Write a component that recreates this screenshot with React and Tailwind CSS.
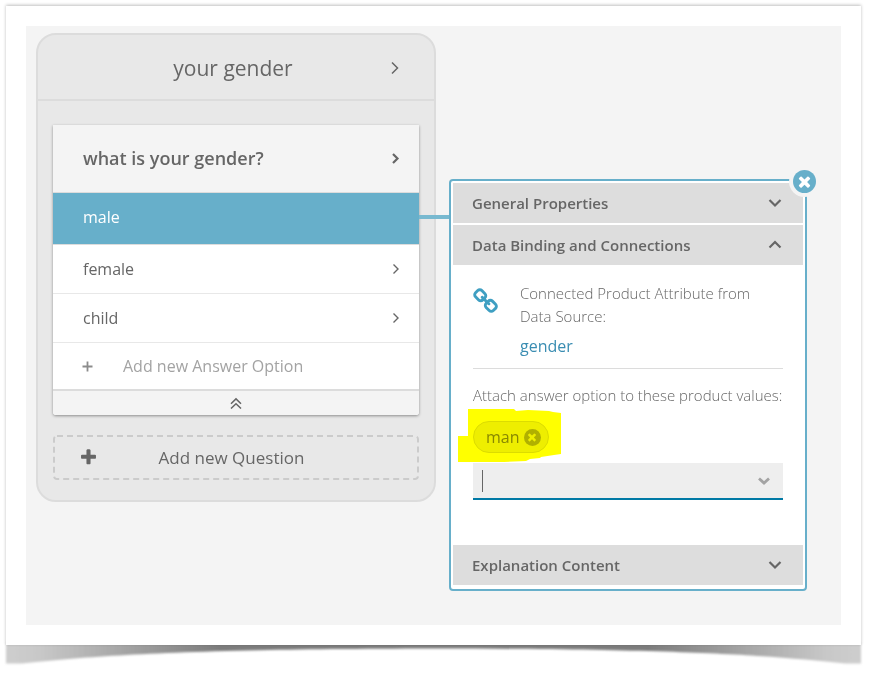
import React from "react";

const PLUS =
  "M1600 736v192q0 40-28 68t-68 28h-416v416q0 40-28 68t-68 28h-192q-40 0-68-28t-28-68v-416h-416q-40 0-68-28t-28-68v-192q0-40 28-68t68-28h416v-416q0-40 28-68t68-28h192q40 0 68 28t28 68v416h416q40 0 68 28t28 68z";
const TIMES =
  "M1490 1322q0 40-28 68l-136 136q-28 28-68 28t-68-28l-294-294-294 294q-28 28-68 28t-68-28l-136-136q-28-28-28-68t28-68l294-294-294-294q-28-28-28-68t28-68l136-136q28-28 68-28t68 28l294 294 294-294q28-28 68-28t68 28l136 136q28 28 28 68t-28 68l-294 294 294 294q28 28 28 68z";
const LINK =
  "M1456 1216q0-40-28-68l-208-208q-28-28-68-28-42 0-72 32 3 3 19 18.5t21.5 21.5 15 19 13 25.5 3.5 27.5q0 40-28 68t-68 28q-15 0-27.5-3.5t-25.5-13-19-15-21.5-21.5-18.5-19q-33 31-33 73 0 40 28 68l206 207q27 27 68 27 40 0 68-26l147-146q28-28 28-67zm-703-705q0-40-28-68l-206-207q-28-28-68-28-39 0-68 27l-147 146q-28 28-28 67 0 40 28 68l208 208q27 27 68 27 42 0 72-31-3-3-19-18.5t-21.5-21.5-15-19-13-25.5-3.5-27.5q0-40 28-68t68-28q15 0 27.5 3.5t25.5 13 19 15 21.5 21.5 18.5 19q33-31 33-73zm895 705q0 120-85 203l-147 146q-83 83-203 83-121 0-204-85l-206-207q-83-83-83-203 0-123 88-209l-88-88q-86 88-208 88-120 0-204-84l-208-208q-84-84-84-204t85-203l147-146q83-83 203-83 121 0 204 85l206 207q83 83 83 203 0 123-88 209l88 88q86-88 208-88 120 0 204 84l208 208q84 84 84 204z";

function Glyph({ d, className }) {
  return (
    <svg viewBox="0 0 1792 1792" fill="currentColor" aria-hidden="true" className={className}>
      <path d={d} />
    </svg>
  );
}

function Chevron({ points = "3,1 9,7 3,13", weight = 2, className }) {
  return (
    <svg
      viewBox="0 0 14 14"
      fill="none"
      stroke="currentColor"
      strokeWidth={weight}
      aria-hidden="true"
      className={className}
    >
      <polyline points={points} />
    </svg>
  );
}

const DOWN = "1.5,4 7,9.5 12.5,4";
const UP = "1.5,9.5 7,4 12.5,9.5";

function AnswerRow({ label }) {
  return (
    <li>
      <button className="flex h-[49px] w-full items-center justify-between border-b border-[#e8e8e8] bg-white pr-4 pl-[30px] text-left">
        <span>{label}</span>
        <Chevron points="4.5,2.5 9,7 4.5,11.5" weight={1.4} className="size-[14px]" />
      </button>
    </li>
  );
}

function SectionHeader({ label, open }) {
  return (
    <h3>
      <button
        aria-expanded={open}
        className="flex h-10 w-full items-center justify-between bg-[#ddd] pr-[21px] pl-[19px] text-left text-[15px] font-semibold"
      >
        <span>{label}</span>
        <Chevron points={open ? UP : DOWN} weight={2.2} className="size-[14px]" />
      </button>
    </h3>
  );
}

function QuestionPanel() {
  return (
    <section className="w-[400px] shrink-0 rounded-[20px] border-2 border-[#dcdcdc] bg-[#e8e8e8]">
      <header className="border-b-2 border-[#dcdcdc]">
        <button className="flex h-16 w-full items-center pt-px pr-8 pl-10 text-[21px] leading-8">
          <span className="flex-1 text-center">your gender</span>
          <Chevron points="4,1.5 9.5,7 4,12.5" weight={1.5} className="size-[14px]" />
        </button>
      </header>

      <div className="px-[15px] pt-6 pb-5">
        <div className="rounded-b-[3px] bg-white shadow-[0_1px_3px_rgba(0,0,0,0.4)]">
          <button className="flex h-[68px] w-full items-center justify-between border-b border-[#dcdcdc] bg-[#f4f4f4] pr-4 pl-[30px] text-left text-[18px] font-semibold">
            <span>what is your gender?</span>
            <Chevron points="4,2 8.5,6.5 4,11" weight={2.2} className="size-[14px]" />
          </button>
          <ul>
            <li className="relative">
              <button className="flex h-[52px] w-full items-center border-b border-[#dcdcdc] bg-[#67afca] pb-1 pl-[30px] text-left text-white">
                male
              </button>
              <span className="absolute top-[22px] left-full h-1 w-[30px] bg-[#78b9d0]" />
            </li>
            <AnswerRow label="female" />
            <AnswerRow label="child" />
          </ul>
          <button className="flex h-12 w-full items-center gap-[30px] border-b-2 border-[#dcdcdc] pl-[29px] text-left text-[#a3a3a3]">
            <svg viewBox="0 0 11 11" className="size-[11px] text-[#8c8c8c]" aria-hidden="true">
              <path d="M5.5 0.5v10M0.5 5.5h10" stroke="currentColor" strokeWidth="1.8" />
            </svg>
            <span>Add new Answer Option</span>
          </button>
          <button
            aria-label="Collapse"
            className="flex h-6 w-full items-center justify-center rounded-b-[3px] bg-[#f4f4f4]"
          >
            <svg viewBox="0 0 12 12" className="size-3" fill="none" stroke="currentColor" strokeWidth="1.5" aria-hidden="true">
              <path d="M1 6.7L6 1.9l5 4.8M1 11.5L6 6.7l5 4.8" />
            </svg>
          </button>
        </div>

        <button className="relative mt-5 flex h-[45px] w-full items-center pl-[26px] text-[17px]">
          <svg className="absolute inset-0 size-full" fill="none" aria-hidden="true">
            <rect
              x="1"
              y="1"
              className="h-[43px] w-[364px]"
              rx="3"
              stroke="#cbcbcb"
              strokeWidth="2"
              strokeDasharray="6 4"
            />
          </svg>
          <Glyph d={PLUS} className="size-[19px]" />
          <span className="flex-1 pr-[54px] text-center">Add new Question</span>
        </button>
      </div>
    </section>
  );
}

function PropertiesPanel() {
  return (
    <section className="relative mt-[146px] w-[358px] shrink-0 rounded-[4px] border-2 border-[#67afca] bg-white px-[2px] pt-[2px] pb-1">
      <button
        aria-label="Close"
        className="absolute -top-[15px] -right-[15px] flex size-[31px] items-center justify-center rounded-full bg-[#f4f4f4]"
      >
        <span className="flex size-[23px] items-center justify-center rounded-full bg-[#67afca] text-white">
          <Glyph d={TIMES} className="size-[17px]" />
        </span>
      </button>

      <div className="flex flex-col gap-[2px]">
        <SectionHeader label="General Properties" open={false} />
        <SectionHeader label="Data Binding and Connections" open />
      </div>

      <div className="px-5 pt-[17px] pb-[45px] text-[15px] font-light">
        <div className="flex gap-5 border-b border-[#dcdcdc] pb-[10px]">
          <Glyph d={LINK} className="mt-[6px] size-[27px] shrink-0 text-[#3f9fc2]" />
          <div>
            <p className="leading-[23px]">Connected Product Attribute from Data Source:</p>
            <a href="#gender" className="mt-[6px] block text-[16px] leading-[24px] font-normal text-[#3a8db2]">
              gender
            </a>
          </div>
        </div>

        <label htmlFor="values" className="mt-[15px] block leading-[22px] whitespace-nowrap">
          Attach answer option to these product values:
        </label>

        <div className="relative mt-[15px] flex">
          <span className="flex h-8 items-center gap-1 rounded-full border border-[#dcdcdc] bg-[#eee] pr-[7px] pl-3 text-[16px] font-normal text-[#888]">
            man
            <button
              aria-label="Remove man"
              className="flex size-[17px] items-center justify-center rounded-full bg-[#b0b0b0] text-[#eee]"
            >
              <Glyph d={TIMES} className="size-3" />
            </button>
          </span>
          <svg
            viewBox="0 0 104 54"
            className="pointer-events-none absolute -top-3 -left-[15px] h-[54px] w-[104px] mix-blend-multiply"
            aria-hidden="true"
          >
            <path
              d="M10 0h46l2 2 12-1 21 1 4 1 8 1v41l-7 1-13 2-1 1-10 1-4 2-22 1H0V27h10z"
              fill="#ff0"
            />
          </svg>
        </div>

        <div className="mt-[10px] flex h-[37px] items-center border-b-2 border-[#0079a5] bg-[#eee] pr-3 pl-[9px]">
          <span className="h-[22px] w-px bg-[#666]" />
          <input id="values" className="min-w-0 flex-1 bg-transparent outline-none" />
          <button aria-label="Show values" className="text-[#a3a3a3]">
            <Chevron points="2,4.5 7,9 12,4.5" weight={2.8} className="size-[14px]" />
          </button>
        </div>
      </div>

      <SectionHeader label="Explanation Content" open={false} />
    </section>
  );
}

function CurledShadow() {
  return (
    <svg
      viewBox="0 0 860 34"
      preserveAspectRatio="none"
      className="absolute -bottom-6 -left-[2px] h-[34px] w-[calc(100%+4px)]"
      aria-hidden="true"
    >
      <defs>
        <linearGradient id="curl">
          <stop offset="0" stopColor="#cecece" />
          <stop offset="0.04" stopColor="#c8c8c8" />
          <stop offset="0.14" stopColor="#a4a4a4" />
          <stop offset="0.25" stopColor="#7c7c7c" />
          <stop offset="0.75" stopColor="#7c7c7c" />
          <stop offset="0.86" stopColor="#a4a4a4" />
          <stop offset="0.96" stopColor="#c8c8c8" />
          <stop offset="1" stopColor="#cecece" />
        </linearGradient>
        <filter id="soften" x="-2%" y="-20%" width="104%" height="140%">
          <feGaussianBlur stdDeviation="1.2" />
        </filter>
      </defs>
      <path
        d="M2 8V28.5H18C90 21 170 14 430 13.5C690 14 770 21 842 28.5H858V8L850 4H10z"
        fill="url(#curl)"
        filter="url(#soften)"
      />
    </svg>
  );
}

export default function App() {
  return (
    <div className="bg-white pt-[6px] pr-[14px] pb-7 pl-[6px] font-['Open_Sans','Noto_Sans',sans-serif] text-[16px] text-[#666]">
      <div className="relative">
        <CurledShadow />
        <div className="relative bg-white p-5 shadow-[0_-1px_3px_rgba(0,0,0,0.25)]">
          <main className="flex items-start gap-[13px] bg-[#f4f4f4] pt-[7px] pb-[34px] pl-[10px]">
            <QuestionPanel />
            <PropertiesPanel />
          </main>
        </div>
      </div>
    </div>
  );
}
